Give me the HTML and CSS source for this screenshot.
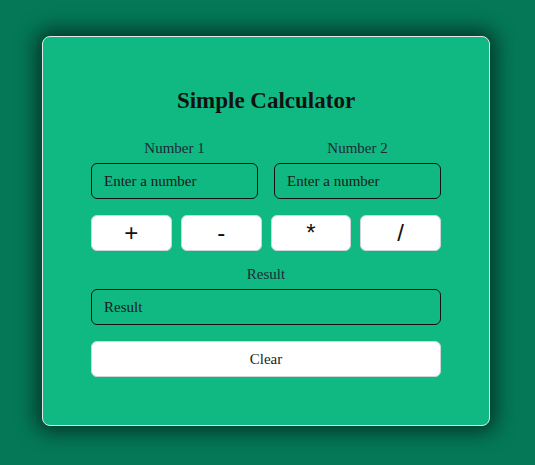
FILE: index.html
```html
<!DOCTYPE html>
<html>
<head>
<meta charset="utf-8">
<link rel="stylesheet" href="styles.css">
</head>
<body>
<div class="card">
  <h1 class="title">Simple Calculator</h1>
  <div class="pair">
    <div class="field">
      <label class="label">Number 1</label>
      <input class="input" type="text" placeholder="Enter a number">
    </div>
    <div class="field">
      <label class="label">Number 2</label>
      <input class="input" type="text" placeholder="Enter a number">
    </div>
  </div>
  <div class="ops">
    <button class="op">+</button>
    <button class="op">-</button>
    <button class="op">*</button>
    <button class="op">/</button>
  </div>
  <div class="field">
    <label class="label">Result</label>
    <input class="input" type="text" placeholder="Result" readonly>
  </div>
  <button class="clear">Clear</button>
</div>
</body>
</html>
```
FILE: styles.css
```css
html, body {
  margin: 0;
  padding: 0;
}
body {
  background: #047857;
  font-family: "Liberation Serif", "DejaVu Serif", serif;
  height: 465px;
  padding: 36px 0 0 42px;
  box-sizing: border-box;
}
.card {
  width: 448px;
  box-sizing: border-box;
  background: #10b981;
  border: 1px solid #e5e7eb;
  border-radius: 8px;
  box-shadow: 0 0 20px 6px rgba(0, 0, 0, 0.55);
  padding: 48px 48px 48px;
  display: flex;
  flex-direction: column;
}
.title {
  margin: 2px 0 25px;
  text-align: center;
  font-size: 23px;
  font-weight: bold;
  color: #111;
  line-height: 28px;
}
.pair {
  display: flex;
  gap: 16px;
}
.pair .field {
  flex: 1;
  min-width: 0;
}
.field {
  display: flex;
  flex-direction: column;
}
.label {
  text-align: center;
  font-size: 15px;
  color: #1f2937;
  line-height: 16px;
  margin-bottom: 7px;
}
.input {
  width: 100%;
  min-width: 0;
  height: 36px;
  box-sizing: border-box;
  border: 1px solid #111;
  border-radius: 6px;
  background: transparent;
  padding: 0 12px;
  font-family: "Liberation Serif", serif;
  font-size: 15px;
  color: #111;
  outline: none;
}
.input::placeholder {
  color: #1a1a1a;
  opacity: 1;
}
.ops {
  display: flex;
  gap: 9px;
  margin: 16px 0 15px;
}
.op {
  flex: 1;
  height: 36px;
  background: #fff;
  border: 1px solid #d1d5db;
  border-radius: 6px;
  font-family: "Liberation Sans", Arial, sans-serif;
  font-size: 24px;
  color: #111;
  padding: 0;
}
.clear {
  flex: none;
  margin-top: 16px;
  height: 36px;
  background: #fff;
  border: 1px solid #d1d5db;
  border-radius: 6px;
  font-family: "Liberation Serif", serif;
  font-size: 15px;
  color: #222;
}
```
